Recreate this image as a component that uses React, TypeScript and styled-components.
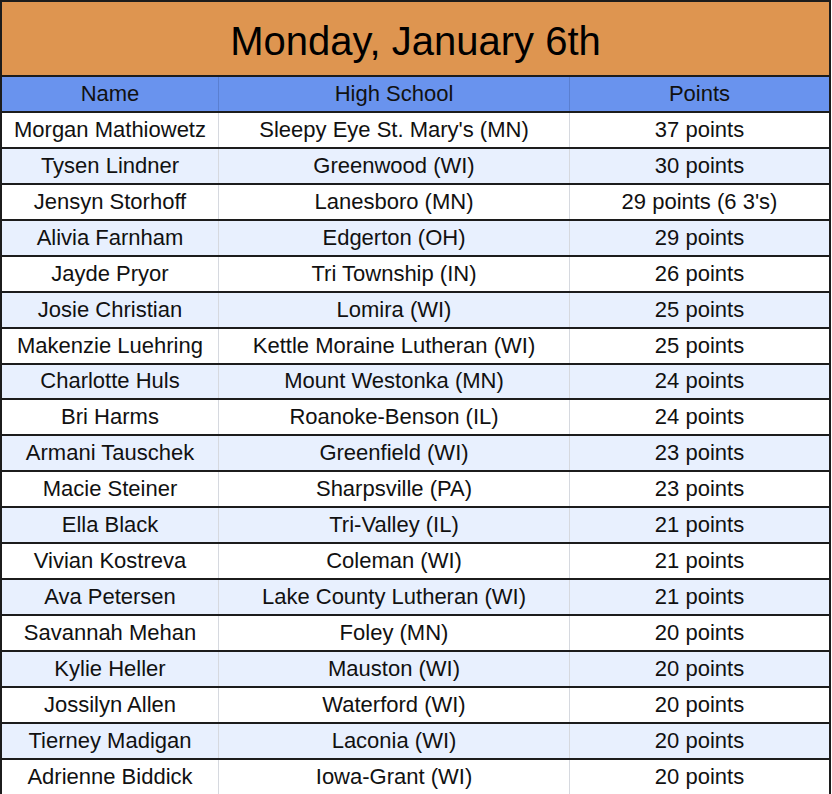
import React from 'react'
import styled, { createGlobalStyle } from 'styled-components'

type Player = {
  name: string
  school: string
  points: string
}

const players: Player[] = [
  { name: 'Morgan Mathiowetz', school: "Sleepy Eye St. Mary's (MN)", points: '37 points' },
  { name: 'Tysen Lindner', school: 'Greenwood (WI)', points: '30 points' },
  { name: 'Jensyn Storhoff', school: 'Lanesboro (MN)', points: "29 points (6 3's)" },
  { name: 'Alivia Farnham', school: 'Edgerton (OH)', points: '29 points' },
  { name: 'Jayde Pryor', school: 'Tri Township (IN)', points: '26 points' },
  { name: 'Josie Christian', school: 'Lomira (WI)', points: '25 points' },
  { name: 'Makenzie Luehring', school: 'Kettle Moraine Lutheran (WI)', points: '25 points' },
  { name: 'Charlotte Huls', school: 'Mount Westonka (MN)', points: '24 points' },
  { name: 'Bri Harms', school: 'Roanoke-Benson (IL)', points: '24 points' },
  { name: 'Armani Tauschek', school: 'Greenfield (WI)', points: '23 points' },
  { name: 'Macie Steiner', school: 'Sharpsville (PA)', points: '23 points' },
  { name: 'Ella Black', school: 'Tri-Valley (IL)', points: '21 points' },
  { name: 'Vivian Kostreva', school: 'Coleman (WI)', points: '21 points' },
  { name: 'Ava Petersen', school: 'Lake County Lutheran (WI)', points: '21 points' },
  { name: 'Savannah Mehan', school: 'Foley (MN)', points: '20 points' },
  { name: 'Kylie Heller', school: 'Mauston (WI)', points: '20 points' },
  { name: 'Jossilyn Allen', school: 'Waterford (WI)', points: '20 points' },
  { name: 'Tierney Madigan', school: 'Laconia (WI)', points: '20 points' },
  { name: 'Adrienne Biddick', school: 'Iowa-Grant (WI)', points: '20 points' },
]

const GlobalStyle = createGlobalStyle`
  body {
    margin: 0;
    background: #ffffff;
    font-family: "Liberation Sans", Arial, sans-serif;
    color: #111111;
  }
`

const Sheet = styled.div`
  width: 831px;
  box-sizing: border-box;
  border: 2px solid #1c1c1c;
  border-bottom: none;
`

const Title = styled.div`
  height: 75px;
  box-sizing: border-box;
  padding-top: 6px;
  background: #de9550;
  border-bottom: 2px solid #1c1c1c;
  display: flex;
  align-items: center;
  justify-content: center;
  font-size: 40px;
  color: #000;
`

const Row = styled.div<{ $bg: string; $line: string }>`
  display: grid;
  grid-template-columns: 216px 351px 1fr;
  height: 33.95px;
  background: ${(p) => p.$bg};
  border-bottom: 2px solid #1c1c1c;

  & > div + div {
    border-left: 1px solid ${(p) => p.$line};
  }
`

const Cell = styled.div`
  display: flex;
  align-items: center;
  justify-content: center;
  font-size: 22px;
  white-space: nowrap;
  overflow: hidden;
`

const App = () => {
  return (
    <>
      <GlobalStyle />
      <Sheet>
        <Title>Monday, January 6th</Title>
        <Row $bg="#6993ee" $line="#5a7fd0">
          <Cell>Name</Cell>
          <Cell>High School</Cell>
          <Cell>Points</Cell>
        </Row>
        {players.map((p, i) => (
          <Row key={p.name} $bg={i % 2 ? '#e8f0fe' : '#ffffff'} $line="#d6d9df">
            <Cell>{p.name}</Cell>
            <Cell>{p.school}</Cell>
            <Cell>{p.points}</Cell>
          </Row>
        ))}
      </Sheet>
    </>
  )
}

export default App
